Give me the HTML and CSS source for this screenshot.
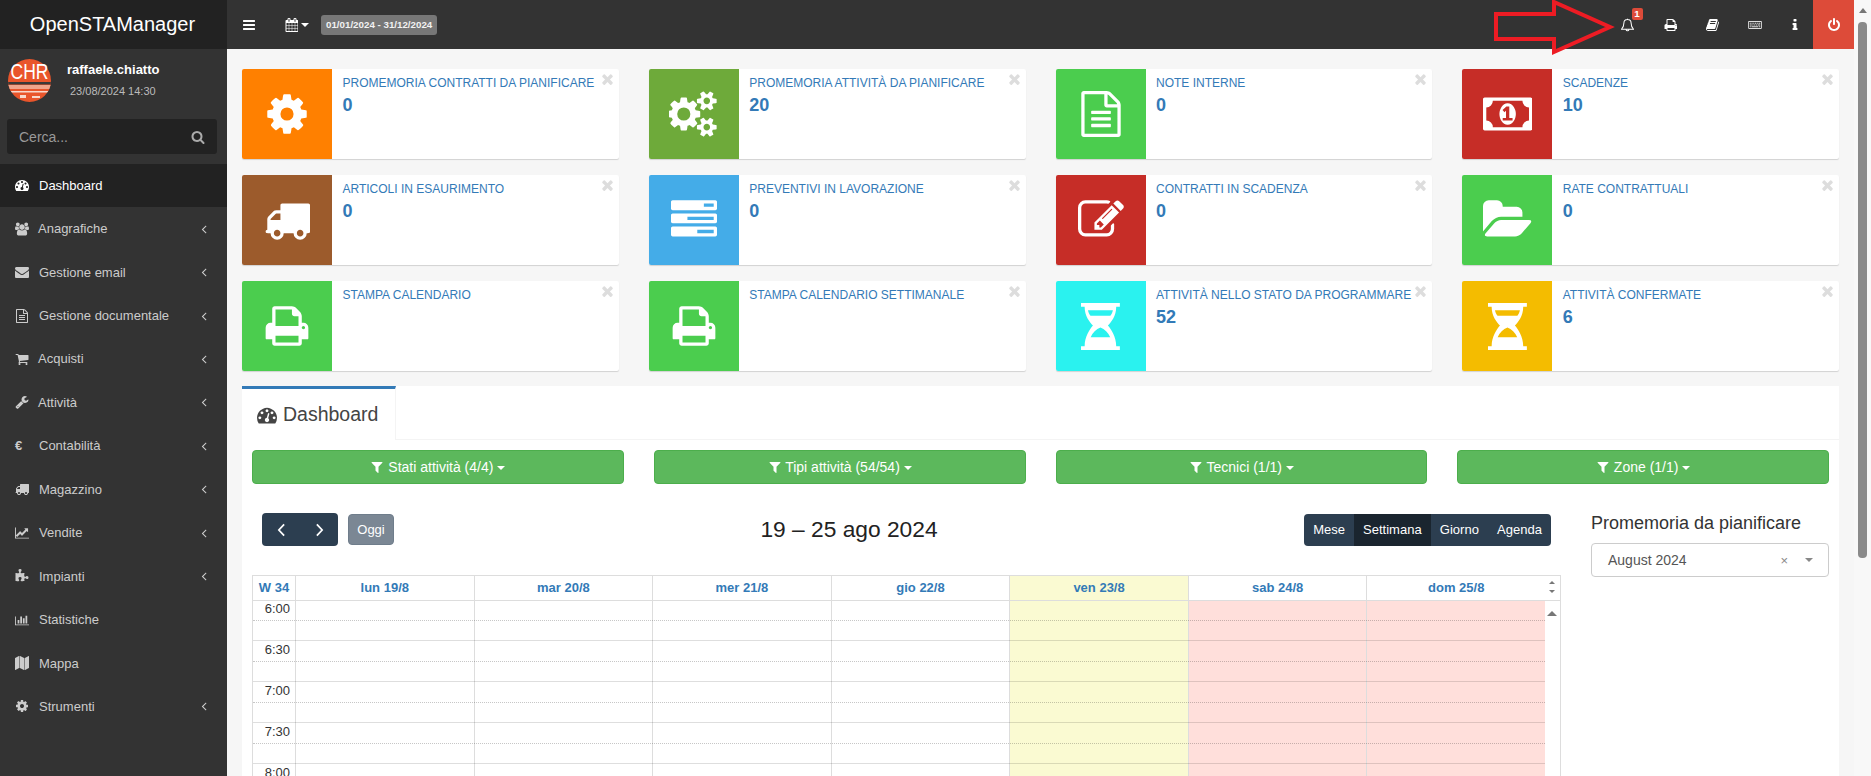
FILE: index.html
```html
<!DOCTYPE html>
<html lang="en">
<head>
    <meta charset="UTF-8">
    <meta name="viewport" content="width=device-width, initial-scale=1.0">
    <title>OpenSTAManager - Dashboard</title>
    <link rel="stylesheet" href="styles.css">
</head>
<body>
    <!-- icon sprite -->
    <svg class="sprite" xmlns="http://www.w3.org/2000/svg">
        <defs>
            <path id="i-cog" d="M1152 896q0-106-75-181t-181-75-181 75-75 181 75 181 181 75 181-75 75-181zm512-109v222q0 12-8 23t-20 13l-185 28q-19 54-39 91 35 50 107 138 10 12 10 25t-9 23q-27 37-99 108t-94 71q-12 0-26-9l-138-108q-44 23-91 38-16 136-29 186-7 28-36 28h-222q-14 0-24.5-8.5t-11.5-21.5l-28-184q-49-16-90-37l-141 107q-10 9-25 9-14 0-25-11-126-114-165-168-7-10-7-23 0-12 8-23 15-21 51-66.5t54-70.5q-27-50-41-99l-183-27q-13-2-21-12.5t-8-23.5v-222q0-12 8-23t19-13l186-28q14-46 39-92-40-57-107-138-10-12-10-24 0-10 9-23 26-36 98.5-107.5t94.5-71.5q13 0 26 10l138 107q44-23 91-38 16-136 29-186 7-28 36-28h222q14 0 24.5 8.5t11.5 21.5l28 184q49 16 90 37l142-107q9-9 24-9 13 0 25 10 129 119 165 170 7 8 7 22 0 12-8 23-15 21-51 66.5t-54 70.5q26 50 41 98l183 28q13 2 21 12.5t8 23.5z"/>
            <path id="i-cogs" d="M832 896q0-106-75-181t-181-75-181 75-75 181 75 181 181 75 181-75 75-181zm768 512q0-52-38-90t-90-38-90 38-38 90q0 53 37.5 90.5t90.5 37.5 90.5-37.5 37.5-90.5zm0-1024q0-52-38-90t-90-38-90 38-38 90q0 53 37.5 90.5t90.5 37.5 90.5-37.5 37.5-90.5zm-384 421v185q0 10-7 19.5t-16 10.5l-155 24q-11 35-32 76 34 48 90 115 7 11 7 20 0 12-7 19-23 30-82.5 89.5t-78.5 59.5q-11 0-21-7l-115-90q-37 19-77 31-11 108-23 155-7 24-30 24h-186q-11 0-20-7.5t-10-17.5l-23-153q-34-10-75-31l-118 89q-7 7-20 7-11 0-21-8-144-133-144-160 0-9 7-19 10-14 41-53t47-61q-23-44-35-82l-152-24q-10-1-17-9.5t-7-19.5v-185q0-10 7-19.5t16-10.5l155-24q11-35 32-76-34-48-90-115-7-11-7-20 0-12 7-20 22-30 82-89t79-59q11 0 21 7l115 90q34-18 77-32 11-108 23-154 7-24 30-24h186q11 0 20 7.5t10 17.5l23 153q34 10 75 31l118-89q8-7 20-7 11 0 21 8 144 133 144 160 0 8-7 19-12 16-42 54t-45 60q23 48 34 82l152 23q10 2 17 10.5t7 19.5zm640 533v140q0 16-149 31-12 27-30 52 51 113 51 138 0 4-4 7-122 71-124 71-8 0-46-47t-52-68q-20 2-30 2t-30-2q-14 21-52 68t-46 47q-2 0-124-71-4-3-4-7 0-25 51-138-18-25-30-52-149-15-149-31v-140q0-16 149-31 13-29 30-52-51-113-51-138 0-4 4-7 4-2 35-20t59-34 30-16q8 0 46 46.5t52 67.5q20-2 30-2t30 2q51-71 92-112l6-2q4 0 124 70 4 3 4 7 0 25-51 138 17 23 30 52 149 15 149 31zm0-1024v140q0 16-149 31-12 27-30 52 51 113 51 138 0 4-4 7-122 71-124 71-8 0-46-47t-52-68q-20 2-30 2t-30-2q-14 21-52 68t-46 47q-2 0-124-71-4-3-4-7 0-25 51-138-18-25-30-52-149-15-149-31v-140q0-16 149-31 13-29 30-52-51-113-51-138 0-4 4-7 4-2 35-20t59-34 30-16q8 0 46 46.5t52 67.5q20-2 30-2t30 2q51-71 92-112l6-2q4 0 124 70 4 3 4 7 0 25-51 138 17 23 30 52 149 15 149 31z"/>
            <path id="i-bars" d="M1664 1344v128q0 26-19 45t-45 19h-1408q-26 0-45-19t-19-45v-128q0-26 19-45t45-19h1408q26 0 45 19t19 45zm0-512v128q0 26-19 45t-45 19h-1408q-26 0-45-19t-19-45v-128q0-26 19-45t45-19h1408q26 0 45 19t19 45zm0-512v128q0 26-19 45t-45 19h-1408q-26 0-45-19t-19-45v-128q0-26 19-45t45-19h1408q26 0 45 19t19 45z"/>
            <path id="i-print" d="M448 1536h896v-256h-896v256zm0-640h896v-384h-160q-40 0-68-28t-28-68v-160h-640v640zm1152 64q0-26-19-45t-45-19-45 19-19 45 19 45 45 19 45-19 19-45zm128 0v416q0 13-9.5 22.5t-22.5 9.5h-224v160q0 40-28 68t-68 28h-960q-40 0-68-28t-28-68v-160h-224q-13 0-22.5-9.5t-9.5-22.5v-416q0-79 56.5-135.5t135.5-56.5h64v-544q0-40 28-68t68-28h672q40 0 88 20t76 48l152 152q28 28 48 76t20 88v256h64q79 0 135.5 56.5t56.5 135.5z"/>
            <path id="i-file" d="M1596 380q28 28 48 76t20 88v1152q0 40-28 68t-68 28h-1344q-40 0-68-28t-28-68v-1600q0-40 28-68t68-28h896q40 0 88 20t76 48zm-444-244v376h376q-10-29-22-41l-313-313q-12-12-41-22zm384 1528v-1024h-416q-40 0-68-28t-28-68v-416h-768v1536h1280zm-1024-864q0-14 9-23t23-9h704q14 0 23 9t9 23v64q0 14-9 23t-23 9h-704q-14 0-23-9t-9-23v-64zm736 224q14 0 23 9t9 23v64q0 14-9 23t-23 9h-704q-14 0-23-9t-9-23v-64q0-14 9-23t23-9h704zm0 256q14 0 23 9t9 23v64q0 14-9 23t-23 9h-704q-14 0-23-9t-9-23v-64q0-14 9-23t23-9h704z"/>
            <path id="i-truck" d="M640 1408q0-52-38-90t-90-38-90 38-38 90 38 90 90 38 90-38 38-90zm-384-512h384v-256h-158q-13 0-22 9l-195 195q-9 9-9 22v30zm1280 512q0-52-38-90t-90-38-90 38-38 90 38 90 90 38 90-38 38-90zm256-1088v1024q0 15-4 26.5t-13.5 18.5-16.5 11.5-23.5 6-22.5 2-25.5 0-22.5-.5q0 106-75 181t-181 75-181-75-75-181h-384q0 106-75 181t-181 75-181-75-75-181h-64q-3 0-22.5.5t-25.5 0-22.5-2-23.5-6-16.5-11.5-13.5-18.5-4-26.5q0-26 19-45t45-19v-320q0-8-.5-35t0-38 2.5-34.5 6.5-37 14-30.5 22.5-30l198-198q19-19 50.5-32t58.5-13h160v-192q0-26 19-45t45-19h1024q26 0 45 19t19 45z"/>
            <path id="i-money" d="M768 1152h384v-96h-128v-448h-114l-148 137 77 80q42-37 55-57h2v288h-128v96zm512-256q0 70-21 142t-59.5 134-101.5 101-138 39-138-39-101.5-101-59.5-134-21-142 21-142 59.5-134 101.5-101 138-39 138 39 101.5 101 59.5 134 21 142zm512 256v-512q-106 0-181-75t-75-181h-1152q0 106-75 181t-181 75v512q106 0 181 75t75 181h1152q0-106 75-181t181-75zm128-832v1152q0 26-19 45t-45 19h-1792q-26 0-45-19t-19-45v-1152q0-26 19-45t45-19h1792q26 0 45 19t19 45z"/>
            <path id="i-edit" d="M888 1184l116-116-152-152-116 116v56h96v96h56zm440-720q-16-16-33 1l-350 350q-17 17-1 33t33-1l350-350q17-17 1-33zm80 594v190q0 119-84.5 203.5t-203.5 84.5h-832q-119 0-203.5-84.5t-84.5-203.5v-832q0-119 84.5-203.5t203.5-84.5h832q63 0 117 25 15 7 18 23 3 17-9 29l-49 49q-14 14-32 8-23-6-45-6h-832q-66 0-113 47t-47 113v832q0 66 47 113t113 47h832q66 0 113-47t47-113v-126q0-13 9-22l64-64q15-15 35-7t20 29zm-96-738l288 288-672 672h-288v-288zm444 132l-92 92-288-288 92-92q28-28 68-28t68 28l152 152q28 28 28 68t-28 68z"/>
            <path id="i-folder" d="M1879 952q0 31-31 66l-336 396q-43 51-120.5 86.5t-143.5 35.5h-1088q-34 0-60.5-13t-26.5-43q0-31 31-66l336-396q43-51 120.5-86.5t143.5-35.5h1088q34 0 60.5 13t26.5 43zm-343-344v160h-832q-94 0-197 47.5t-164 119.5l-337 396-5 6q0-4-.5-12.5t-.5-12.5v-960q0-92 66-158t158-66h320q92 0 158 66t66 158v32h544q92 0 158 66t66 158z"/>
            <path id="i-hourglass" fill-rule="evenodd" d="M0 0H1482V139H1343C1343 500 1150 720 1026 862C1150 1000 1343 1300 1343 1647H1482V1792H0V1647H139C139 1300 332 1000 456 862C332 720 139 500 139 139H0zM266 280H1216C1200 360 1170 430 1120 490H362C312 430 282 360 266 280zM741 930C900 990 1040 1130 1115 1305H367C442 1130 582 990 741 930z"/>
            <path id="i-tasks" d="M1024 1408h640v-128h-640v128zm-384-512h1024v-128h-1024v128zm640-512h384v-128h-384v128zm512 832v256q0 26-19 45t-45 19h-1664q-26 0-45-19t-19-45v-256q0-26 19-45t45-19h1664q26 0 45 19t19 45zm0-512v256q0 26-19 45t-45 19h-1664q-26 0-45-19t-19-45v-256q0-26 19-45t45-19h1664q26 0 45 19t19 45zm0-512v256q0 26-19 45t-45 19h-1664q-26 0-45-19t-19-45v-256q0-26 19-45t45-19h1664q26 0 45 19t19 45z"/>
            <path id="i-dashboard" d="M384 1152q0-53-37.5-90.5t-90.5-37.5-90.5 37.5-37.5 90.5 37.5 90.5 90.5 37.5 90.5-37.5 37.5-90.5zm192-448q0-53-37.5-90.5t-90.5-37.5-90.5 37.5-37.5 90.5 37.5 90.5 90.5 37.5 90.5-37.5 37.5-90.5zm428 481l101-382q6-26-7.5-48.5t-38.5-29.5-48 6.5-30 39.5l-101 382q-60 5-107 43.5t-63 98.5q-20 77 20 146t117 89 146-20 89-117q16-60-6-117t-72-91zm660-33q0-53-37.5-90.5t-90.5-37.5-90.5 37.5-37.5 90.5 37.5 90.5 90.5 37.5 90.5-37.5 37.5-90.5zm-640-640q0-53-37.5-90.5t-90.5-37.5-90.5 37.5-37.5 90.5 37.5 90.5 90.5 37.5 90.5-37.5 37.5-90.5zm448 192q0-53-37.5-90.5t-90.5-37.5-90.5 37.5-37.5 90.5 37.5 90.5 90.5 37.5 90.5-37.5 37.5-90.5zm320 448q0 261-141 483-19 29-54 29h-1402q-35 0-54-29-141-221-141-483 0-182 71-348t191-286 286-191 348-71 348 71 286 191 191 286 71 348z"/>
            <path id="i-users" d="M593 896q-162 5-265 128h-134q-82 0-138-40.5t-56-118.5q0-353 124-353 6 0 43.5 21t97.5 42.5 119 21.5q67 0 133-23-5 37-5 66 0 139 81 256zm1071 637q0 120-73 189.5t-194 69.5h-874q-121 0-194-69.5t-73-189.5q0-53 3.5-103.5t14-109 26.5-108.5 43-97.5 62-81 85.5-53.5 111.5-20q10 0 43 21.5t73 48 107 48 135 21.5 135-21.5 107-48 73-48 43-21.5q61 0 111.5 20t85.5 53.5 62 81 43 97.5 26.5 108.5 14 109 3.5 103.5zm-1024-1277q0 106-75 181t-181 75-181-75-75-181 75-181 181-75 181 75 75 181zm704 384q0 159-112.5 271.5t-271.5 112.5-271.5-112.5-112.5-271.5 112.5-271.5 271.5-112.5 271.5 112.5 112.5 271.5zm576 225q0 78-56 118.5t-138 40.5h-134q-103-123-265-128 81-117 81-256 0-29-5-66 66 23 133 23 59 0 119-21.5t97.5-42.5 43.5-21q124 0 124 353zm-128-609q0 106-75 181t-181 75-181-75-75-181 75-181 181-75 181 75 75 181z"/>
            <path id="i-envelope" d="M1792 710v794q0 66-47 113t-113 47h-1472q-66 0-113-47t-47-113v-794q44 49 101 87 362 246 497 345 57 42 92.5 65.5t94.5 48 110 24.5h2q51 0 110-24.5t94.5-48 92.5-65.5q170-123 498-345 57-39 100-87zm0-294q0 79-49 151t-122 123q-376 261-468 325-10 7-42.5 30.5t-54 38-52 32.5-57.5 27-50 9h-2q-23 0-50-9t-57.5-27-52-32.5-54-38-42.5-30.5q-91-64-262-182.5t-205-142.5q-62-42-117-115.5t-55-136.5q0-78 41.5-130t118.5-52h1472q65 0 112.5 47t47.5 113z"/>
            <path id="i-cart" d="M704 1536q0 52-38 90t-90 38-90-38-38-90 38-90 90-38 90 38 38 90zm896 0q0 52-38 90t-90 38-90-38-38-90 38-90 90-38 90 38 38 90zm128-1088v512q0 24-16.5 42.5t-40.5 21.5l-1044 122q13 60 13 70 0 16-24 64h920q26 0 45 19t19 45-19 45-45 19h-1024q-26 0-45-19t-19-45q0-11 8-31.5t16-36 21.5-40 15.5-29.5l-177-823h-204q-26 0-45-19t-19-45 19-45 45-19h256q16 0 28.5 6.5t19.5 15.5 13 24.5 8 26 5.5 29.5 4.5 26h1201q26 0 45 19t19 45z"/>
            <path id="i-wrench" d="M448 1472q0-26-19-45t-45-19-45 19-19 45 19 45 45 19 45-19 19-45zm644-420l-682 682q-37 37-90 37-52 0-91-37l-106-108q-38-36-38-90 0-53 38-91l681-681q39 98 114.5 173.5t173.5 114.5zm634-435q0 39-23 106-47 134-164.5 217.5t-258.5 83.5q-185 0-316.5-131.5t-131.5-316.5 131.5-316.5 316.5-131.5q58 0 121.5 16.5t107.5 46.5q16 11 16 28t-16 28l-293 169v224l193 107q5-3 79-48.5t135.5-81 70.5-35.5q15 0 23.5 10t8.5 25z"/>
            <path id="i-line" d="M1920 1536v128h-1920v-1536h128v1408h1792zm-128-1248v435q0 21-19.5 29.5t-35.5-7.5l-121-121-633 633q-10 10-23 10t-23-10l-233-233-416 416-192-192 585-585q10-10 23-10t23 10l233 233 464-464-121-121q-16-16-7.5-35.5t29.5-19.5h435q14 0 23 9t9 23z"/>
            <path id="i-bar" d="M640 896v512h-256v-512h256zm384-512v1024h-256v-1024h256zm1024 1152v128h-2048v-1280h128v1152h1920zm-640-896v768h-256v-768h256zm384-384v1152h-256v-1152h256z"/>
            <path id="i-map" d="M512 0q13 0 22.5 9.5t9.5 22.5v1472q0 20-17 28l-480 256q-7 4-15 4-13 0-22.5-9.5t-9.5-22.5v-1472q0-20 17-28l480-256q7-4 15-4zm1248 0q13 0 22.5 9.5t9.5 22.5v1472q0 20-17 28l-480 256q-7 4-15 4-13 0-22.5-9.5t-9.5-22.5v-1472q0-20 17-28l480-256q7-4 15-4zm-1120 0q8 0 14 3l512 256q18 10 18 29v1472q0 13-9.5 22.5t-22.5 9.5q-8 0-14-3l-512-256q-18-10-18-29v-1472q0-13 9.5-22.5t22.5-9.5z"/>
            <path id="i-puzzle" d="M1664 1098q0 81-44.5 135t-123.5 54q-41 0-77.5-17.5t-59-38-56.5-38-71-17.5q-110 0-110 124 0 39 16 115t15 115v5q-22 0-33 1-34 3-97.5 11.5t-115.5 13.5-98 5q-61 0-103-26.5t-42-83.5q0-37 17.5-71t38-56.5 38-59 17.5-77.5q0-79-54-123.5t-135-44.5q-84 0-143 45.5t-59 127.5q0 43 15 83t33.5 64.5 33.5 53 15 50.5q0 45-46 89-37 35-117 35-95 0-245-24-9-2-27.5-4t-27.5-4l-13-2q-1 0-3-1-2 0-2-1v-1024q2 1 17.5 3.5t34 5 21.5 3.5q150 24 245 24 80 0 117-35 46-44 46-89 0-22-15-50.5t-33.5-53-33.5-64.5-15-83q0-82 59-127.5t144-45.5q80 0 134 44.5t54 123.5q0 41-17.5 77.5t-38 59-38 56.5-17.5 71q0 57 42 83.5t103 26.5q64 0 180-15t163-17v2q-1 2-3.5 17.5t-5 34-3.5 21.5q-24 150-24 245 0 80 35 117 44 46 89 46 22 0 50.5-15t53-33.5 64.5-33.5 83-15q82 0 127.5 59t45.5 143z"/>
            <path id="i-angle-left" d="M1203 544q0 13-10 23l-393 393 393 393q10 10 10 23t-10 23l-50 50q-10 10-23 10t-23-10l-466-466q-10-10-10-23t10-23l466-466q10-10 23-10t23 10l50 50q10 10 10 23z"/>
            <path id="i-search" d="M1216 832q0-185-131.5-316.5t-316.5-131.5-316.5 131.5-131.5 316.5 131.5 316.5 316.5 131.5 316.5-131.5 131.5-316.5zm512 832q0 52-38 90t-90 38q-54 0-90-38l-343-342q-179 124-399 124-143 0-273.5-55.5t-225-150-150-225-55.5-273.5 55.5-273.5 150-225 225-150 273.5-55.5 273.5 55.5 225 150 150 225 55.5 273.5q0 220-124 399l343 343q37 37 37 90z"/>
            <path id="i-calendar" d="M192 1664h288v-288h-288v288zm352 0h320v-288h-320v288zm-352-352h288v-320h-288v320zm352 0h320v-320h-320v320zm-352-384h288v-288h-288v288zm736 736h320v-288h-320v288zm-384-736h320v-288h-320v288zm768 736h288v-288h-288v288zm-384-352h320v-320h-320v320zm-352-864v-288q0-13-9.5-22.5t-22.5-9.5h-64q-13 0-22.5 9.5t-9.5 22.5v288q0 13 9.5 22.5t22.5 9.5h64q13 0 22.5-9.5t9.5-22.5zm736 864h288v-320h-288v320zm-384-384h320v-288h-320v288zm384 0h288v-288h-288v288zm32-480v-288q0-13-9.5-22.5t-22.5-9.5h-64q-13 0-22.5 9.5t-9.5 22.5v288q0 13 9.5 22.5t22.5 9.5h64q13 0 22.5-9.5t9.5-22.5zm384-64v1280q0 52-38 90t-90 38h-1408q-52 0-90-38t-38-90v-1280q0-52 38-90t90-38h128v-96q0-66 47-113t113-47h64q66 0 113 47t47 113v96h384v-96q0-66 47-113t113-47h64q66 0 113 47t47 113v96h128q52 0 90 38t38 90z"/>
            <path id="i-book" d="M1639 478q40 57 18 129l-275 906q-19 64-76.5 107.5t-122.5 43.5h-923q-77 0-148.5-53.5t-99.5-131.5q-24-67-2-127 0-4 3-27t4-37q1-8-3-21.5t-3-19.5q2-11 8-21t16.5-23.5 16.5-23.5q23-38 45-91.5t30-91.5q3-10 .5-30t-.5-28q3-11 17-28t17-23q21-36 42-92t25-90q1-9-2.5-32t.5-28q4-13 22-30.5t22-22.5q19-26 42.5-84.5t27.5-96.5q1-8-3-25.5t-2-26.5q2-8 9-18t18-23 17-21q8-12 16.5-30.5t15-35 16-36 19.5-32 26.5-23.5 36-11.5 47.5 5.5l-1 3q38-9 51-9h761q74 0 114 56t18 130l-274 906q-36 119-71.5 153.5t-128.5 34.5h-869q-27 0-38 15-11 16-1 43 24 70 144 70h923q29 0 56-15.5t35-41.5l300-987q7-22 5-57 38 15 59 43zm-1064 2q-4 13 2 22.5t20 9.5h608q13 0 25.5-9.5t16.5-22.5l21-64q4-13-2-22.5t-20-9.5h-608q-13 0-25.5 9.5t-16.5 22.5zm-83 256q-4 13 2 22.5t20 9.5h608q13 0 25.5-9.5t16.5-22.5l21-64q4-13-2-22.5t-20-9.5h-608q-13 0-25.5 9.5t-16.5 22.5z"/>
            <path id="i-info" d="M1216 1344v128q0 26-19 45t-45 19h-512q-26 0-45-19t-19-45v-128q0-26 19-45t45-19h64v-384h-64q-26 0-45-19t-19-45v-128q0-26 19-45t45-19h384q26 0 45 19t19 45v576h64q26 0 45 19t19 45zm-128-1152v192q0 26-19 45t-45 19h-256q-26 0-45-19t-19-45v-192q0-26 19-45t45-19h256q26 0 45 19t19 45z"/>
            <path id="i-power" d="M1664 896q0 156-61 298t-164 245-245 164-298 61-298-61-245-164-164-245-61-298q0-182 80.5-343t226.5-270q43-32 95.5-25t83.5 50q32 42 24.5 94.5t-49.5 84.5q-98 74-151.5 181t-53.5 228q0 104 40.5 198.5t109.5 163.5 163.5 109.5 198.5 40.5 198.5-40.5 163.5-109.5 109.5-163.5 40.5-198.5q0-121-53.5-228t-151.5-181q-42-32-49.5-84.5t24.5-94.5q31-43 84-50t95 25q146 109 226.5 270t80.5 343zm-640-768v640q0 52-38 90t-90 38-90-38-38-90v-640q0-52 38-90t90-38 90 38 38 90z"/>
            <path id="i-filter" d="M1595 295q17 41-14 70l-493 493v742q0 42-39 59-13 5-25 5-27 0-45-19l-256-256q-19-19-19-45v-486l-493-493q-31-29-14-70 17-39 59-39h1280q42 0 59 39z"/>
            <path id="i-times" d="M1298 1214q0 40-28 68l-136 136q-28 28-68 28t-68-28l-294-294-294 294q-28 28-68 28t-68-28l-136-136q-28-28-28-68t28-68l294-294-294-294q-28-28-28-68t28-68l136-136q28-28 68-28t68 28l294 294 294-294q28-28 68-28t68 28l136 136q28 28 28 68t-28 68l-294 294 294 294q28 28 28 68z"/>
            <path id="i-keyboard" fill-rule="evenodd" d="M160 320H1888Q2048 320 2048 480V1312Q2048 1472 1888 1472H160Q0 1472 0 1312V480Q0 320 160 320zM160 448Q128 448 128 480V1312Q128 1344 160 1344H1888Q1920 1344 1920 1312V480Q1920 448 1888 448zM256 576H416V704H256zM512 576H672V704H512zM768 576H928V704H768zM1024 576H1184V704H1024zM1280 576H1440V704H1280zM1536 576H1792V704H1536zM256 832H544V960H256zM640 832H800V960H640zM896 832H1056V960H896zM1152 832H1312V960H1152zM1408 832H1792V960H1408zM256 1088H416V1216H256zM512 1088H1504V1216H512zM1600 1088H1792V1216H1600z"/>
            <path id="i-bell" fill="none" stroke="currentColor" stroke-width="130" d="M896 190C640 190 440 370 440 610C440 1000 340 1230 120 1440H1672C1452 1230 1352 1000 1352 610C1352 370 1152 190 896 190zM896 190V110M720 1500C730 1680 1062 1680 1072 1500"/>
        </defs>
    </svg>

    <div class="wrapper">
        <div class="main-col">
            <header class="topbar">
                <div class="logo">OpenSTAManager</div>
                <nav class="navbar">
                    <a class="nav-toggle"><svg class="ico-14" viewBox="0 0 1792 1792"><use href="#i-bars"/></svg></a>
                    <a class="nav-period">
                        <svg class="ico-14" viewBox="0 0 1664 1792"><use href="#i-calendar"/></svg>
                        <span class="caret"></span>
                    </a>
                    <span class="period-label">01/01/2024 - 31/12/2024</span>
                    <div class="nav-right">
                        <a class="nav-btn">
                            <svg class="ico-14" viewBox="64 0 1664 1792"><use href="#i-bell"/></svg>
                            <span class="bell-count">1</span>
                        </a>
                        <a class="nav-btn"><svg class="ico-14" viewBox="0 0 1728 1792"><use href="#i-print"/></svg></a>
                        <a class="nav-btn nav-btn-book"><svg class="ico-14" viewBox="0 0 1664 1792"><use href="#i-book"/></svg></a>
                        <a class="nav-btn nav-btn-kbd"><svg class="ico-kbd" viewBox="0 0 2048 1792"><use href="#i-keyboard"/></svg></a>
                        <a class="nav-btn"><svg class="ico-info" viewBox="576 0 640 1792"><use href="#i-info"/></svg></a>
                        <a class="nav-power"><svg class="ico-14" viewBox="0 0 1792 1792"><use href="#i-power"/></svg></a>
                    </div>
                </nav>
            </header>

            <div class="body-row">
                <aside class="sidebar">
                    <div class="user-panel">
                        <svg class="avatar" viewBox="0 0 43 43">
                            <defs><clipPath id="avatar-clip"><circle cx="21.5" cy="21.5" r="21.5"/></clipPath></defs>
                            <g clip-path="url(#avatar-clip)">
                                <rect width="43" height="43" fill="#e9552b"/>
                                <rect y="23" width="43" height="2.5" fill="#3a3a3a"/>
                                <rect y="26" width="43" height="4" fill="#f0a58c"/>
                                <rect y="30" width="43" height="2" fill="#e9552b"/>
                                <rect y="32" width="43" height="1.5" fill="#f7d8cc"/>
                                <rect x="12" y="36" width="6" height="3" fill="#f7d8cc"/>
                                <rect x="24" y="37" width="8" height="2" fill="#f7d8cc"/>
                            </g>
                            <text class="avatar-text" x="2.5" y="20" textLength="38" lengthAdjust="spacingAndGlyphs">CHR</text>
                        </svg>
                        <div class="user-info">
                            <div class="user-name">raffaele.chiatto</div>
                            <div class="user-date">23/08/2024 14:30</div>
                        </div>
                    </div>
                    <form class="search-form">
                        <input class="search-input" type="text" placeholder="Cerca...">
                        <svg class="search-ico" viewBox="0 0 1792 1792"><use href="#i-search"/></svg>
                    </form>
                    <ul class="menu">
                        <li class="menu-item active"><span class="menu-ico"><svg viewBox="0 0 1792 1792"><use href="#i-dashboard"/></svg></span>Dashboard</li>
                        <li class="menu-item tight"><span class="menu-ico"><svg viewBox="0 0 1920 1792"><use href="#i-users"/></svg></span>Anagrafiche<svg class="menu-arrow" viewBox="0 0 1792 1792"><use href="#i-angle-left"/></svg></li>
                        <li class="menu-item"><span class="menu-ico"><svg viewBox="0 0 1792 1792"><use href="#i-envelope"/></svg></span>Gestione email<svg class="menu-arrow" viewBox="0 0 1792 1792"><use href="#i-angle-left"/></svg></li>
                        <li class="menu-item"><span class="menu-ico"><svg viewBox="0 0 1792 1792"><use href="#i-file"/></svg></span>Gestione documentale<svg class="menu-arrow" viewBox="0 0 1792 1792"><use href="#i-angle-left"/></svg></li>
                        <li class="menu-item tight"><span class="menu-ico"><svg viewBox="0 0 1792 1792"><use href="#i-cart"/></svg></span>Acquisti<svg class="menu-arrow" viewBox="0 0 1792 1792"><use href="#i-angle-left"/></svg></li>
                        <li class="menu-item tight"><span class="menu-ico"><svg viewBox="0 0 1792 1792"><use href="#i-wrench"/></svg></span>Attività<svg class="menu-arrow" viewBox="0 0 1792 1792"><use href="#i-angle-left"/></svg></li>
                        <li class="menu-item"><span class="menu-ico menu-euro">€</span>Contabilità<svg class="menu-arrow" viewBox="0 0 1792 1792"><use href="#i-angle-left"/></svg></li>
                        <li class="menu-item"><span class="menu-ico"><svg viewBox="0 0 1792 1792"><use href="#i-truck"/></svg></span>Magazzino<svg class="menu-arrow" viewBox="0 0 1792 1792"><use href="#i-angle-left"/></svg></li>
                        <li class="menu-item"><span class="menu-ico"><svg viewBox="0 0 1920 1792"><use href="#i-line"/></svg></span>Vendite<svg class="menu-arrow" viewBox="0 0 1792 1792"><use href="#i-angle-left"/></svg></li>
                        <li class="menu-item"><span class="menu-ico"><svg viewBox="0 0 1664 1792"><use href="#i-puzzle"/></svg></span>Impianti<svg class="menu-arrow" viewBox="0 0 1792 1792"><use href="#i-angle-left"/></svg></li>
                        <li class="menu-item"><span class="menu-ico"><svg viewBox="0 0 2048 1792"><use href="#i-bar"/></svg></span>Statistiche</li>
                        <li class="menu-item"><span class="menu-ico"><svg viewBox="0 0 1792 1792"><use href="#i-map"/></svg></span>Mappa</li>
                        <li class="menu-item"><span class="menu-ico"><svg viewBox="0 0 1792 1792"><use href="#i-cog"/></svg></span>Strumenti<svg class="menu-arrow" viewBox="0 0 1792 1792"><use href="#i-angle-left"/></svg></li>
                    </ul>
                </aside>

                <main class="content">
                    <div class="info-grid">
                        <div class="info-box">
                            <div class="info-icon bg-orange"><svg viewBox="0 0 1792 1792"><use href="#i-cog"/></svg></div>
                            <div class="info-body"><div class="info-text">Promemoria contratti da pianificare</div><div class="info-number">0</div></div>
                            <svg class="info-close" viewBox="0 0 1408 1792"><use href="#i-times"/></svg>
                        </div>
                        <div class="info-box">
                            <div class="info-icon bg-olive"><svg viewBox="0 0 1920 1792"><use href="#i-cogs"/></svg></div>
                            <div class="info-body"><div class="info-text">Promemoria attività da pianificare</div><div class="info-number">20</div></div>
                            <svg class="info-close" viewBox="0 0 1408 1792"><use href="#i-times"/></svg>
                        </div>
                        <div class="info-box">
                            <div class="info-icon bg-green"><svg viewBox="0 0 1792 1792"><use href="#i-file"/></svg></div>
                            <div class="info-body"><div class="info-text">Note interne</div><div class="info-number">0</div></div>
                            <svg class="info-close" viewBox="0 0 1408 1792"><use href="#i-times"/></svg>
                        </div>
                        <div class="info-box">
                            <div class="info-icon bg-red"><svg viewBox="0 0 1920 1792"><use href="#i-money"/></svg></div>
                            <div class="info-body"><div class="info-text">Scadenze</div><div class="info-number">10</div></div>
                            <svg class="info-close" viewBox="0 0 1408 1792"><use href="#i-times"/></svg>
                        </div>

                        <div class="info-box">
                            <div class="info-icon bg-brown"><svg viewBox="0 0 1792 1792"><use href="#i-truck"/></svg></div>
                            <div class="info-body"><div class="info-text">Articoli in esaurimento</div><div class="info-number">0</div></div>
                            <svg class="info-close" viewBox="0 0 1408 1792"><use href="#i-times"/></svg>
                        </div>
                        <div class="info-box">
                            <div class="info-icon bg-blue"><svg viewBox="0 0 1792 1792"><use href="#i-tasks"/></svg></div>
                            <div class="info-body"><div class="info-text">Preventivi in lavorazione</div><div class="info-number">0</div></div>
                            <svg class="info-close" viewBox="0 0 1408 1792"><use href="#i-times"/></svg>
                        </div>
                        <div class="info-box">
                            <div class="info-icon bg-red"><svg viewBox="0 0 1792 1792"><use href="#i-edit"/></svg></div>
                            <div class="info-body"><div class="info-text">Contratti in scadenza</div><div class="info-number">0</div></div>
                            <svg class="info-close" viewBox="0 0 1408 1792"><use href="#i-times"/></svg>
                        </div>
                        <div class="info-box">
                            <div class="info-icon bg-green"><svg viewBox="0 0 1920 1792"><use href="#i-folder"/></svg></div>
                            <div class="info-body"><div class="info-text">Rate contrattuali</div><div class="info-number">0</div></div>
                            <svg class="info-close" viewBox="0 0 1408 1792"><use href="#i-times"/></svg>
                        </div>

                        <div class="info-box">
                            <div class="info-icon bg-green"><svg viewBox="0 0 1792 1792"><use href="#i-print"/></svg></div>
                            <div class="info-body"><div class="info-text">Stampa calendario</div></div>
                            <svg class="info-close" viewBox="0 0 1408 1792"><use href="#i-times"/></svg>
                        </div>
                        <div class="info-box">
                            <div class="info-icon bg-green"><svg viewBox="0 0 1792 1792"><use href="#i-print"/></svg></div>
                            <div class="info-body"><div class="info-text">Stampa calendario settimanale</div></div>
                            <svg class="info-close" viewBox="0 0 1408 1792"><use href="#i-times"/></svg>
                        </div>
                        <div class="info-box">
                            <div class="info-icon bg-cyan"><svg class="hourglass" viewBox="0 0 1482 1792"><use href="#i-hourglass"/></svg></div>
                            <div class="info-body"><div class="info-text">Attività nello stato da programmare</div><div class="info-number">52</div></div>
                            <svg class="info-close" viewBox="0 0 1408 1792"><use href="#i-times"/></svg>
                        </div>
                        <div class="info-box">
                            <div class="info-icon bg-yellow"><svg class="hourglass" viewBox="0 0 1482 1792"><use href="#i-hourglass"/></svg></div>
                            <div class="info-body"><div class="info-text">Attività confermate</div><div class="info-number">6</div></div>
                            <svg class="info-close" viewBox="0 0 1408 1792"><use href="#i-times"/></svg>
                        </div>
                    </div>

                    <section class="tab-box">
                        <div class="tab-bar">
                            <div class="tab-active">
                                <svg viewBox="0 0 1792 1792"><use href="#i-dashboard"/></svg>
                                <span>Dashboard</span>
                            </div>
                        </div>
                        <div class="tab-pane">
                            <div class="filter-row">
                                <button class="btn-filter"><svg viewBox="0 0 1792 1792"><use href="#i-filter"/></svg> Stati attività (4/4) <span class="caret"></span></button>
                                <button class="btn-filter"><svg viewBox="0 0 1792 1792"><use href="#i-filter"/></svg> Tipi attività (54/54) <span class="caret"></span></button>
                                <button class="btn-filter"><svg viewBox="0 0 1792 1792"><use href="#i-filter"/></svg> Tecnici (1/1) <span class="caret"></span></button>
                                <button class="btn-filter"><svg viewBox="0 0 1792 1792"><use href="#i-filter"/></svg> Zone (1/1) <span class="caret"></span></button>
                            </div>

                            <div class="cal-area">
                                <div class="cal-col">
                                    <div class="cal-toolbar">
                                        <div class="cal-left">
                                            <div class="cal-nav">
                                                <button class="cal-nav-btn"><svg viewBox="0 0 10 16"><path d="M8 1.5 2 8l6 6.5"/></svg></button>
                                                <button class="cal-nav-btn"><svg viewBox="0 0 10 16"><path d="M2 1.5 8 8l-6 6.5"/></svg></button>
                                            </div>
                                            <button class="cal-today">Oggi</button>
                                        </div>
                                        <h2 class="cal-title">19 – 25 ago 2024</h2>
                                        <div class="cal-views">
                                            <button class="cal-view">Mese</button>
                                            <button class="cal-view active">Settimana</button>
                                            <button class="cal-view">Giorno</button>
                                            <button class="cal-view">Agenda</button>
                                        </div>
                                    </div>

                                    <div class="cal-table">
                                        <div class="cal-head">
                                            <div class="cal-week">W 34</div>
                                            <div class="cal-day">lun 19/8</div>
                                            <div class="cal-day">mar 20/8</div>
                                            <div class="cal-day">mer 21/8</div>
                                            <div class="cal-day">gio 22/8</div>
                                            <div class="cal-day today">ven 23/8</div>
                                            <div class="cal-day">sab 24/8</div>
                                            <div class="cal-day">dom 25/8</div>
                                            <div class="cal-scroll-head">
                                                <span class="tri-up"></span>
                                                <span class="tri-down"></span>
                                            </div>
                                        </div>
                                        <div class="cal-body">
                                            <div class="cal-bg"></div>
                                            <div class="cal-bg"></div>
                                            <div class="cal-bg"></div>
                                            <div class="cal-bg"></div>
                                            <div class="cal-bg today"></div>
                                            <div class="cal-bg weekend"></div>
                                            <div class="cal-bg weekend"></div>
                                            <div class="cal-scroll"><span class="tri-up-big"></span></div>
                                            <div class="cal-rows">
                                                <div class="slot minor"><span class="slot-time">6:00</span></div>
                                                <div class="slot major"></div>
                                                <div class="slot minor"><span class="slot-time">6:30</span></div>
                                                <div class="slot major"></div>
                                                <div class="slot minor"><span class="slot-time">7:00</span></div>
                                                <div class="slot major"></div>
                                                <div class="slot minor"><span class="slot-time">7:30</span></div>
                                                <div class="slot major"></div>
                                                <div class="slot minor"><span class="slot-time">8:00</span></div>
                                            </div>
                                        </div>
                                    </div>
                                </div>

                                <div class="reminder-col">
                                    <h4 class="reminder-title">Promemoria da pianificare</h4>
                                    <div class="month-select">
                                        <span class="month-value">August 2024</span>
                                        <span class="month-clear">×</span>
                                        <span class="month-caret"></span>
                                    </div>
                                </div>
                            </div>
                        </div>
                    </section>
                </main>
            </div>
        </div>

        <div class="page-scroll">
            <span class="page-scroll-up"></span>
            <span class="page-scroll-thumb"></span>
        </div>

        <!-- red arrow drawn over the screenshot -->
        <svg class="annotation" viewBox="0 0 124 56">
            <path d="M3 14H61V2L117 27 61 52V39H3z"/>
        </svg>
    </div>
</body>
</html>
```

FILE: styles.css
```css
* {
    box-sizing: border-box;
}

html, body {
    height: 100%;
    margin: 0;
    overflow: hidden;
}

body {
    font-family: "Liberation Sans", Arial, sans-serif;
    font-size: 13px;
    color: #333;
    background-color: #f6f6f6;
}

svg {
    fill: currentColor;
}

.sprite {
    display: none;
}

.wrapper {
    position: relative;
    display: flex;
    height: 100%;
    overflow: hidden;
}

.main-col {
    flex: 1;
    min-width: 0;
    display: flex;
    flex-direction: column;
}

/* top bar */
.topbar {
    flex: none;
    display: flex;
    height: 49px;
}

.logo {
    flex: none;
    width: 227px;
    padding-right: 2px;
    background-color: #222;
    color: #fff;
    font-size: 20px;
    line-height: 49px;
    text-align: center;
}

.navbar {
    flex: 1;
    display: flex;
    align-items: center;
    background-color: #333;
    color: #fff;
}

.ico-14 {
    display: block;
    height: 14px;
    width: auto;
}

.nav-toggle {
    margin-left: 15px;
}

.nav-period {
    display: flex;
    align-items: center;
    margin-left: 29px;
    gap: 3px;
}

.caret {
    display: inline-block;
    width: 0;
    height: 0;
    border-top: 4px solid currentColor;
    border-left: 4px solid transparent;
    border-right: 4px solid transparent;
    vertical-align: middle;
}

.period-label {
    margin-left: 12px;
    padding: 0 5px;
    height: 20px;
    line-height: 20px;
    border-radius: 3px;
    background-color: #777;
    color: #f2f2f2;
    font-size: 9.75px;
    font-weight: bold;
}

.nav-right {
    margin-left: auto;
    display: flex;
    height: 100%;
}

.nav-btn {
    position: relative;
    display: flex;
    align-items: center;
    padding: 0 15px;
}

.nav-btn-book {
    padding: 0 14px;
}

.ico-kbd {
    display: block;
    width: 14px;
    height: 14px;
    color: #ddd;
}

.ico-info {
    display: block;
    width: 6px;
    height: 14px;
}

.bell-count {
    position: absolute;
    top: 8px;
    left: 26px;
    width: 11px;
    height: 12px;
    border-radius: 2px;
    background-color: #dd4b39;
    color: #fff;
    font-size: 9.75px;
    font-weight: bold;
    line-height: 12px;
    text-align: center;
}

.nav-power {
    display: flex;
    align-items: center;
    justify-content: center;
    width: 41px;
    background-color: #dd4b39;
}

/* page scrollbar */
.page-scroll {
    flex: none;
    width: 17px;
    background-color: #f8f8f8;
    display: flex;
    flex-direction: column;
    align-items: center;
}

.page-scroll-up {
    margin-top: 8px;
    width: 0;
    height: 0;
    border-bottom: 5px solid #777;
    border-left: 4px solid transparent;
    border-right: 4px solid transparent;
}

.page-scroll-thumb {
    margin-top: 9px;
    width: 9px;
    height: 536px;
    border-radius: 4px;
    background-color: #8a8a8a;
}

.annotation {
    position: absolute;
    top: 0;
    left: 1493px;
    width: 124px;
    height: 56px;
    fill: none;
    stroke: #ed1c24;
    stroke-width: 4;
}

/* sidebar */
.body-row {
    flex: 1;
    min-height: 0;
    display: flex;
}

.sidebar {
    flex: none;
    width: 227px;
    background-color: #333;
    color: #ccc;
}

.user-panel {
    display: flex;
    height: 70px;
}

.avatar {
    flex: none;
    width: 43px;
    height: 43px;
    margin: 10px 16px 0 8px;
    overflow: visible;
}

.avatar-text {
    fill: #fff;
    font-size: 22px;
}

.user-name {
    margin-top: 13px;
    color: #fff;
    font-weight: bold;
    line-height: 16px;
}

.user-date {
    margin-top: 5px;
    padding-left: 3px;
    font-size: 11px;
    line-height: 16px;
    color: #bbb;
}

.search-form {
    display: flex;
    align-items: center;
    height: 35px;
    margin: 0 10px 10px 7px;
    padding-right: 12px;
    border-radius: 3px;
    background-color: #222;
}

.search-input {
    flex: 1;
    min-width: 0;
    padding: 0 0 0 12px;
    border: 0;
    background: transparent;
    font-family: inherit;
    font-size: 14px;
    color: #999;
}

.search-input::placeholder {
    color: #999;
    opacity: 1;
}

.search-ico {
    width: 14px;
    height: 14px;
    color: #aaa;
}

.menu {
    margin: 0;
    padding: 0;
    list-style: none;
}

.menu-item {
    display: flex;
    align-items: center;
    height: 43.45px;
    padding: 0 16px 1px 15px;
}

.menu-item.active {
    background-color: #222;
    color: #fff;
}

.menu-ico {
    flex: none;
    width: 24px;
}

.menu-item.tight .menu-ico {
    width: 23px;
}

.menu-ico svg {
    display: block;
    width: 14px;
    height: 14px;
}

.menu-euro {
    font-weight: bold;
}

.menu-arrow {
    margin-left: auto;
    width: 14px;
    height: 14px;
}

/* info boxes */
.content {
    flex: 1;
    min-width: 0;
    padding: 20px 15px 0;
}

.info-grid {
    display: grid;
    grid-template-columns: repeat(4, 1fr);
    grid-auto-rows: 90px;
    gap: 16px 30px;
}

.info-box {
    position: relative;
    display: flex;
    background-color: #fff;
    border-radius: 2px;
    box-shadow: 0 1px 1px rgba(0, 0, 0, 0.15);
}

.info-icon {
    flex: none;
    width: 90px;
    display: flex;
    align-items: center;
    justify-content: center;
    border-radius: 2px 0 0 2px;
    color: #fff;
}

.info-icon svg {
    display: block;
    height: 46px;
    width: auto;
}

.info-icon .hourglass {
    height: 47px;
}

.bg-orange { background-color: #ff8000; }
.bg-olive { background-color: #6eaa3a; }
.bg-green { background-color: #4bcd4e; }
.bg-red { background-color: #c62d27; }
.bg-brown { background-color: #9c5b2c; }
.bg-blue { background-color: #44ace8; }
.bg-cyan { background-color: #2af2ef; }
.bg-yellow { background-color: #f4bc00; }

.info-body {
    padding: 5px 0 0 10.5px;
}

.info-text {
    font-size: 12px;
    line-height: 18px;
    text-transform: uppercase;
    color: #337ab7;
}

.info-number {
    font-size: 18px;
    font-weight: bold;
    line-height: 26px;
    color: #337ab7;
}

.info-close {
    position: absolute;
    top: 3px;
    right: 5px;
    width: 13px;
    height: 16px;
    color: #ddd;
}

/* dashboard box */
.tab-box {
    margin-top: 15px;
    background-color: #fff;
}

.tab-bar {
    height: 54px;
    border-bottom: 1px solid #f4f4f4;
}

.tab-active {
    display: flex;
    align-items: center;
    gap: 6px;
    width: 154px;
    height: 54px;
    padding-left: 15px;
    border-top: 3px solid #337ab7;
    border-right: 1px solid #f4f4f4;
    background-color: #fff;
    font-size: 19.5px;
    color: #444;
}

.tab-active svg {
    width: 20px;
    height: 20px;
}

.tab-pane {
    padding: 10px 10px 0;
}

.filter-row {
    display: grid;
    grid-template-columns: repeat(4, 1fr);
    gap: 30px;
}

.btn-filter {
    height: 34px;
    border: 1px solid #4cae4c;
    border-radius: 4px;
    background-color: #5cb85c;
    color: #fff;
    font-family: inherit;
    font-size: 14px;
}

.btn-filter svg {
    width: 14px;
    height: 14px;
    vertical-align: -2px;
}

/* calendar */
.cal-area {
    display: flex;
    gap: 30px;
    margin-top: 29px;
}

.cal-col {
    flex: 1;
    min-width: 0;
}

.cal-toolbar {
    display: flex;
    align-items: center;
    justify-content: space-between;
    height: 33px;
    padding: 0 10px;
}

.cal-left {
    display: flex;
    align-items: center;
    gap: 10px;
}

.cal-nav {
    display: flex;
    border-radius: 4px;
    background-color: #2c3e50;
}

.cal-nav-btn {
    display: flex;
    align-items: center;
    justify-content: center;
    width: 38px;
    height: 33px;
    padding: 0;
    border: 0;
    background: transparent;
}

.cal-nav-btn svg {
    width: 9px;
    height: 14px;
    fill: none;
    stroke: #fff;
    stroke-width: 2;
}

.cal-today {
    width: 46px;
    height: 31px;
    padding: 0;
    border: 1px solid #6f7d8b;
    border-radius: 4px;
    background-color: #7b8794;
    color: #fff;
    font-family: inherit;
    font-size: 13px;
}

.cal-title {
    margin: 0;
    font-size: 22.75px;
    font-weight: normal;
    color: #222;
}

.cal-views {
    display: flex;
    height: 32px;
    border-radius: 4px;
    overflow: hidden;
    background-color: #2c3e50;
}

.cal-view {
    padding: 0 9.1px;
    border: 0;
    background: transparent;
    color: #fff;
    font-family: inherit;
    font-size: 13px;
}

.cal-view.active {
    background-color: #1a252f;
}

.cal-table {
    margin-top: 29px;
    border: 1px solid #ddd;
    border-bottom: 0;
}

.cal-head,
.cal-body {
    display: grid;
    grid-template-columns: 42px repeat(7, 1fr) 15px;
}

.cal-head {
    height: 25px;
    border-bottom: 1px solid #ddd;
}

.cal-week,
.cal-day {
    font-weight: bold;
    line-height: 24px;
    text-align: center;
    color: #337ab7;
}

.cal-day {
    border-left: 1px solid #ddd;
}

.cal-day.today,
.cal-bg.today {
    background-color: #fafad2;
}

.cal-scroll-head {
    display: flex;
    flex-direction: column;
    align-items: center;
    gap: 6px;
    padding-top: 5px;
}

.tri-up,
.tri-up-big {
    width: 0;
    height: 0;
    border-bottom: 3px solid #777;
    border-left: 3px solid transparent;
    border-right: 3px solid transparent;
}

.tri-down {
    width: 0;
    height: 0;
    border-top: 3px solid #777;
    border-left: 3px solid transparent;
    border-right: 3px solid transparent;
}

.tri-up-big {
    display: block;
    margin: 10px auto 0;
    border-bottom-width: 5px;
    border-left-width: 5px;
    border-right-width: 5px;
}

.cal-body {
    height: 175px;
    overflow: hidden;
}

.cal-bg {
    grid-row: 1;
    border-left: 1px solid #ddd;
}

.cal-bg:nth-child(1) { grid-column: 2; }
.cal-bg:nth-child(2) { grid-column: 3; }
.cal-bg:nth-child(3) { grid-column: 4; }
.cal-bg:nth-child(4) { grid-column: 5; }
.cal-bg:nth-child(5) { grid-column: 6; }
.cal-bg:nth-child(6) { grid-column: 7; }
.cal-bg:nth-child(7) { grid-column: 8; }

.cal-bg.weekend {
    background-color: #ffdfdb;
}

.cal-scroll {
    grid-row: 1;
    grid-column: 9;
}

.cal-rows {
    grid-row: 1;
    grid-column: 1 / 9;
    margin-top: -1px;
}

.slot {
    height: 20.5px;
    border-bottom: 1px solid rgba(0, 0, 0, 0.13);
}

.slot.minor {
    border-bottom: 1px dotted rgba(0, 0, 0, 0.22);
}

.slot-time {
    display: block;
    width: 42px;
    padding-right: 5px;
    line-height: 18px;
    text-align: right;
}

/* reminder column */
.reminder-col {
    flex: none;
    width: 238px;
}

.reminder-title {
    margin: 0;
    font-size: 18px;
    font-weight: normal;
    line-height: 20px;
    color: #333;
}

.month-select {
    display: flex;
    align-items: center;
    height: 34px;
    margin-top: 10px;
    padding: 0 15px 0 16px;
    border: 1px solid #ccc;
    border-radius: 4px;
    font-size: 14px;
    color: #555;
}

.month-value {
    flex: 1;
}

.month-clear {
    margin-right: 17px;
    font-size: 13px;
    color: #888;
}

.month-caret {
    width: 0;
    height: 0;
    border-top: 4px solid #888;
    border-left: 4px solid transparent;
    border-right: 4px solid transparent;
}
```
